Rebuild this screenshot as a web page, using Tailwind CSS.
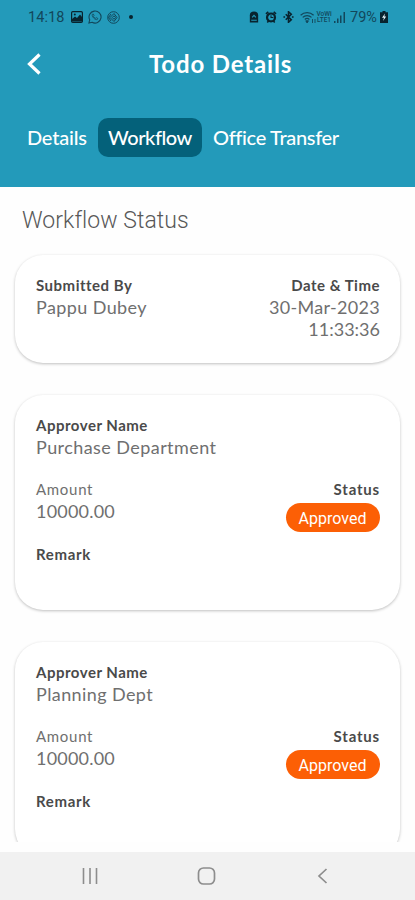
<!DOCTYPE html>
<html lang="en">
<head>
<meta charset="utf-8">
<meta name="viewport" content="width=device-width, initial-scale=1">
<title>Todo Details</title>
<script src="https://cdn.jsdelivr.net/npm/@tailwindcss/browser@4"></script>
</head>
<body class="bg-white">
<div class="flex h-[900px] w-[415px] flex-col overflow-hidden bg-[#fefefe] font-['Lato','Liberation_Sans',sans-serif] whitespace-nowrap">
  <header class="h-[187px] shrink-0 bg-[#239aba] text-white">
    <div class="flex h-[34px] items-center pr-[27px] pl-[28px] font-['Roboto',sans-serif] text-[#12475b]">
      <span class="mt-[2px] w-[37px] text-[14.5px] leading-4 tracking-[0.1px]">14:18</span>
      <svg class="ml-[6px]" width="12" height="12" viewBox="0 0 12 12"><rect x=".6" y=".6" width="10.8" height="10.8" rx="1.2" fill="none" stroke="#08232e" stroke-width="1.2"/><path d="M1 10.5V8l3-2.5 2 1.5 3-3.5 2.4 3v4z" fill="#08232e"/><circle cx="3.8" cy="3.4" r="1" fill="#08232e"/></svg>
      <svg class="ml-[5px]" width="14" height="14" viewBox="0 0 14 14" fill="none" stroke="#12475b" stroke-width="1.1"><path d="M.9 13.1l.8-3.3A6 6 0 1 1 4.1 12.3z"/><path d="M4.7 4c-.9.8-.5 2.400.8 3.900 1.500 1.600 3.100 2.200 4.100 1.300l.2-.8-1.600-.8-.8.7c-1-.4-1.700-1.200-2-2l.6-.7-.6-1.500z" stroke-width=".8"/></svg>
      <svg class="ml-[5px]" width="13" height="13" viewBox="0 0 13 13" fill="none" stroke="#12475b"><circle cx="6.500" cy="6.500" r="5.800"/><path d="M3 6.500L7 2.500l3 4-3 4zM4 3L1.500 6.500 4 10M7 4.800L5.300 6.500 7 8.300l1.500-1.800z"/></svg>
      <i class="ml-[9px] size-[3.500px] rounded-full bg-[#08232e]"></i>
      <span class="grow"></span>
      <svg width="10" height="12" viewBox="0 0 10 13"><path d="M.5 12.500V4.500a4.500 4 0 0 1 9 0v8z" fill="#08232e"/><path d="M2 10h6M3 7L5 4.800l2 2.200" stroke="#239aba" stroke-width="1.200" fill="none"/></svg>
      <svg class="ml-[6px]" width="12" height="12" viewBox="0 0 13 13"><circle cx="6.500" cy="7" r="4.300" fill="none" stroke="#08232e" stroke-width="2.400"/><path d="M1 3.200L3.600 1M12 3.200L9.400 1M2.500 12.500l1.500-2M10.500 12.500l-1.500-2" stroke="#08232e" stroke-width="1.700"/><path d="M6.500 4.500V7H9" fill="none" stroke="#08232e" stroke-width="1.100"/></svg>
      <svg class="ml-[6px]" width="11" height="12" viewBox="0 0 11 13" fill="none" stroke="#08232e" stroke-width="1.700"><path d="M2.500 3.500l6 6-3 2.700V.8l3 2.700-6 6"/><path d="M0 6.500h1.800M9.200 6.500H11"/></svg>
      <svg class="ml-[6px]" width="16" height="13" viewBox="0 0 16 13" fill="none" stroke="#12475b" stroke-width="1.200"><path d="M.6 4.200a9.500 9.500 0 0 1 13 0M2.700 6.400a6.500 6.500 0 0 1 8.800 0M4.800 8.500a3.400 3.400 0 0 1 4.600 0"/><path d="M7.100 12L5.800 9.800h2.600zM12.500 8v4M15 12V8" fill="#12475b" stroke-width=".9"/></svg>
      <span class="flex w-[16px] flex-col items-center text-[6.500px] leading-[6.500px] font-medium"><span>VoWi</span><span>LTE1</span></span>
      <svg class="ml-[1px]" width="13" height="12" viewBox="0 0 13 12" fill="#12475b"><path d="M1 10h1.500v2H1zM4 7.500h1.500V12H4zM7 4.500h1.500V12H7zM10.500 1H12v11h-1.500z"/></svg>
      <span class="mt-[2px] ml-[4px] w-[30px] text-[14.500px] leading-4">79%</span>
      <svg width="8" height="12" viewBox="0 0 8 12"><path d="M2.500 0h3v1.200H8V12H0V1.200h2.500z" fill="#08232e"/><path d="M5 2.500L2 6.700h2L3 10l3.200-4.500H4.300z" fill="#e8f6fa"/></svg>
    </div>
    <div class="grid h-[62px] grid-cols-[149px_1fr] items-center">
      <svg class="-mt-[3px] ml-[26px]" width="16" height="24" viewBox="0 0 16 24" fill="none" stroke="#fff" stroke-width="3.200"><path d="M13.500 2.500L3.500 12l10 9.500"/></svg>
      <h1 class="-mt-[2px] text-[24px] leading-[30px] font-bold tracking-[0.85px]">Todo Details</h1>
    </div>
    <nav class="mt-[22px] flex h-[39px] items-center text-[20px] leading-[26px] font-medium">
      <a class="-mt-[2px] w-[98px] shrink-0 pl-[27px] -tracking-[0.2px]">Details</a>
      <a class="flex h-[39px] w-[104px] shrink-0 items-center justify-center rounded-[10px] bg-[#04617a] pb-[2px] -tracking-[0.45px]">Workflow</a>
      <a class="-mt-[2px] ml-[11px] -tracking-[0.33px]">Office Transfer</a>
    </nav>
  </header>
  <main class="h-[655px] shrink-0 overflow-hidden px-[15px] text-[#6f6f6f]">
    <h2 class="pt-[20px] pl-[7px] font-['Roboto',sans-serif] text-[23px] leading-[28px] font-light tracking-[0.05px] text-[#585858]">Workflow Status</h2>
    <section class="mt-[20px] flex h-[108px] justify-between rounded-[28px] bg-white pr-[20px] pl-[21px] pt-[19px] shadow-[0_1px_3px_rgba(0,0,0,0.25)]">
      <div>
        <div class="text-[15px] leading-[22px] font-bold tracking-[0.5px] text-[#4a4a4a]">Submitted By</div>
        <div class="text-[18px] leading-[22px] tracking-[0.4px]">Pappu Dubey</div>
      </div>
      <div class="text-right">
        <div class="text-[15px] leading-[22px] font-bold tracking-[0.5px] text-[#4a4a4a]">Date &amp; Time</div>
        <div class="text-[18px] leading-[22px] tracking-[0.3px]">30-Mar-2023</div>
        <div class="text-[18px] leading-[22px]">11:33:36</div>
      </div>
    </section>
    <section class="mt-[32px] h-[215px] rounded-[28px] bg-white pr-[20px] pl-[21px] pt-[19px] shadow-[0_1px_3px_rgba(0,0,0,0.25)]">
      <div class="text-[15px] leading-[22px] font-bold tracking-[0.5px] text-[#4a4a4a]">Approver Name</div>
      <div class="text-[18px] leading-[22px] tracking-[0.43px]">Purchase Department</div>
      <div class="mt-[20px] flex justify-between">
        <div>
          <div class="text-[15px] leading-[22px] tracking-[0.7px]">Amount</div>
          <div class="text-[18px] leading-[22px] tracking-[0.2px]">10000.00</div>
        </div>
        <div class="flex flex-col items-end">
          <div class="text-[15px] leading-[22px] font-bold tracking-[0.8px] text-[#4a4a4a]">Status</div>
          <div class="mt-[3px] flex h-[29px] w-[94px] items-center justify-center rounded-full bg-[#fc5f05] pt-[2px] pr-px font-['Roboto',sans-serif] text-[16px] text-white">Approved</div>
        </div>
      </div>
      <div class="mt-[11px] text-[15px] leading-[22px] font-bold tracking-[0.65px] text-[#4a4a4a]">Remark</div>
    </section>
    <section class="mt-[32px] h-[215px] rounded-[28px] bg-white pr-[20px] pl-[21px] pt-[19px] shadow-[0_1px_3px_rgba(0,0,0,0.25)]">
      <div class="text-[15px] leading-[22px] font-bold tracking-[0.5px] text-[#4a4a4a]">Approver Name</div>
      <div class="text-[18px] leading-[22px] tracking-[0.4px]">Planning Dept</div>
      <div class="mt-[20px] flex justify-between">
        <div>
          <div class="text-[15px] leading-[22px] tracking-[0.7px]">Amount</div>
          <div class="text-[18px] leading-[22px] tracking-[0.2px]">10000.00</div>
        </div>
        <div class="flex flex-col items-end">
          <div class="text-[15px] leading-[22px] font-bold tracking-[0.8px] text-[#4a4a4a]">Status</div>
          <div class="mt-[3px] flex h-[29px] w-[94px] items-center justify-center rounded-full bg-[#fc5f05] pt-[2px] pr-px font-['Roboto',sans-serif] text-[16px] text-white">Approved</div>
        </div>
      </div>
      <div class="mt-[11px] text-[15px] leading-[22px] font-bold tracking-[0.65px] text-[#4a4a4a]">Remark</div>
    </section>
  </main>
  <footer class="mt-[10px] flex h-[48px] shrink-0 items-center bg-[#f1f1f1] pl-[82px]">
    <svg width="16" height="16" viewBox="0 0 16 16" stroke="#8d8d8d" stroke-width="1.600"><path d="M1.500 0v16M8 0v16M14.500 0v16"/></svg>
    <svg class="ml-[99px]" width="19" height="18" viewBox="0 0 19 18" fill="none" stroke="#8d8d8d" stroke-width="1.700"><rect x="1.500" y="1" width="16" height="16" rx="5"/></svg>
    <svg class="ml-[101px]" width="11" height="16" viewBox="0 0 11 16" fill="none" stroke="#8d8d8d" stroke-width="1.700"><path d="M9.500 1l-7.500 7 7.500 7"/></svg>
  </footer>
</div>
</body>
</html>
